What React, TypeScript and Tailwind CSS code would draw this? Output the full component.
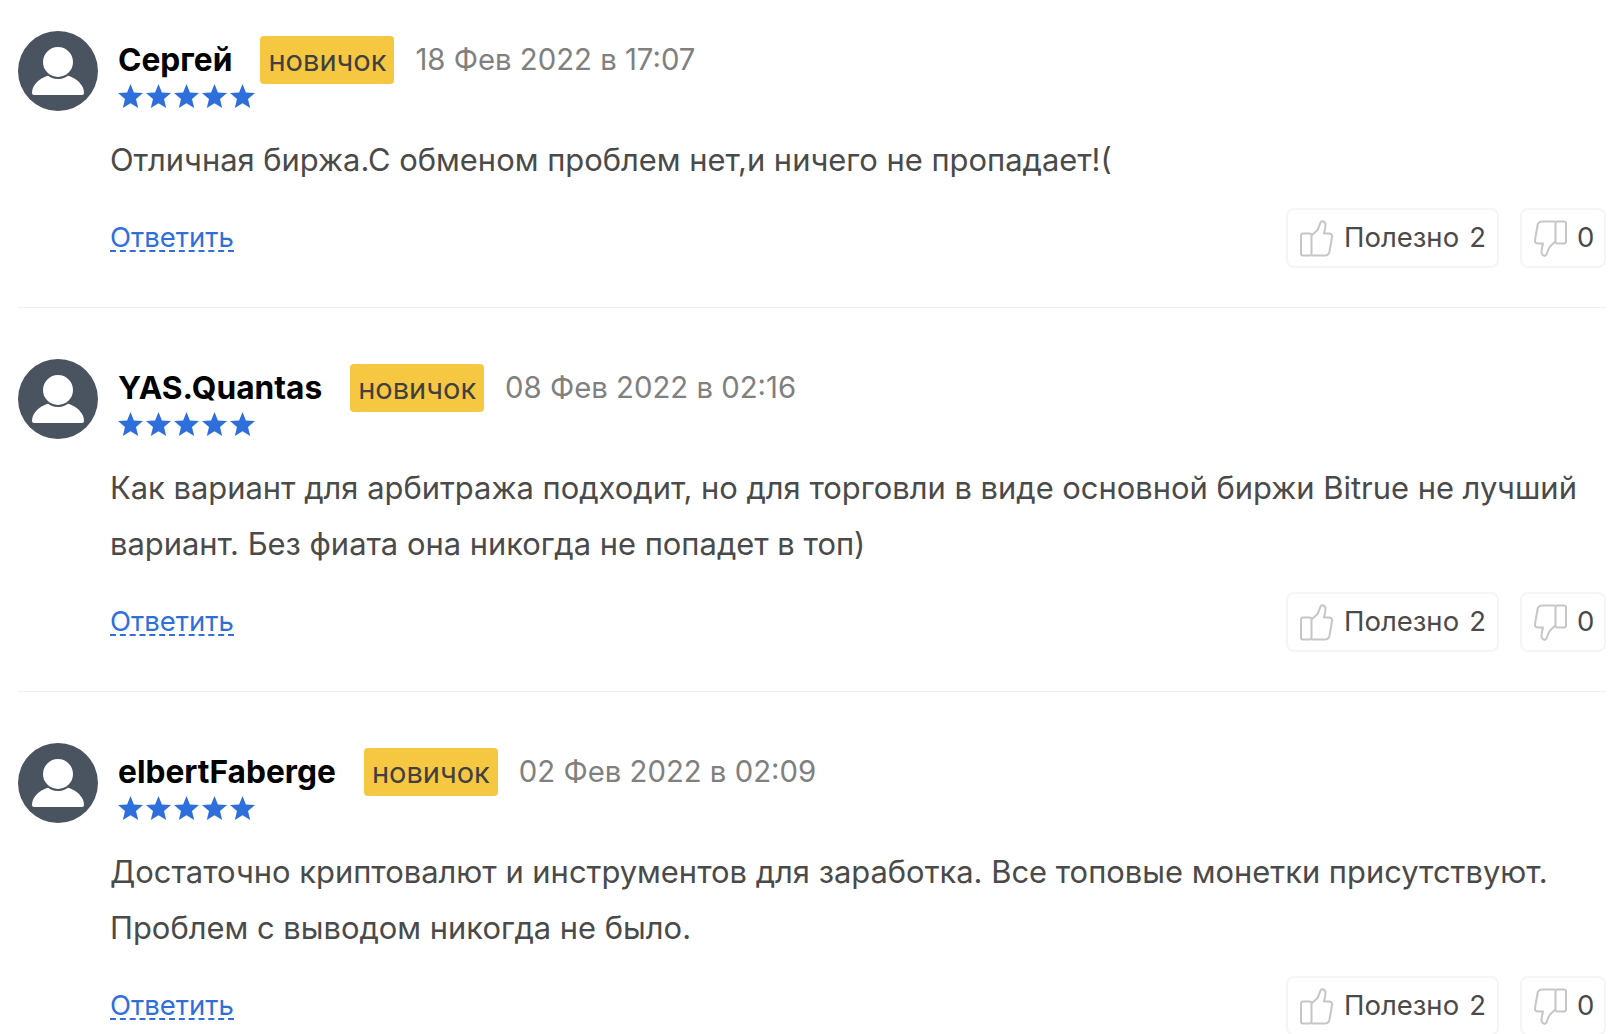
import React from 'react';

interface Comment {
  name: string;
  date: string;
  lines: string[];
}

const comments: Comment[] = [
  {
    name: 'Сергей',
    date: '18 Фев 2022 в 17:07',
    lines: ['Отличная биржа.С обменом проблем нет,и ничего не пропадает!('],
  },
  {
    name: 'YAS.Quantas',
    date: '08 Фев 2022 в 02:16',
    lines: [
      'Как вариант для арбитража подходит, но для торговли в виде основной биржи Bitrue не лучший',
      'вариант. Без фиата она никогда не попадет в топ)',
    ],
  },
  {
    name: 'elbertFaberge',
    date: '02 Фев 2022 в 02:09',
    lines: [
      'Достаточно криптовалют и инструментов для заработка. Все топовые монетки присутствуют.',
      'Проблем с выводом никогда не было.',
    ],
  },
];

const Avatar = () => (
  <svg width="80" height="80" viewBox="0 0 80 80" className="shrink-0">
    <circle cx="40" cy="40" r="40" fill="#4a5360" />
    <path d="M14 62c0-10 12-19 26-19s26 9 26 19c0 1-1 2-2 2H16c-1 0-2-1-2-2z" fill="#fff" />
    <ellipse cx="40" cy="31" rx="16" ry="16" fill="#fff" stroke="#4a5360" strokeWidth="2" />
  </svg>
);

const Star = () => (
  <svg width="25" height="24" viewBox="0 0 25 24">
    <polygon points="12.5,0 15.9,8.4 25,9.1 18,15 20.2,24 12.5,19.2 4.8,24 7,15 0,9.1 9.1,8.4" fill="#2f6fdb" />
  </svg>
);

const Thumb = ({ down }: { down?: boolean }) => (
  <svg width="33" height="37" viewBox="0 0 33 37" fill="none" stroke="#c6c6c6" strokeWidth="2" className={down ? 'rotate-180' : ''}>
    <rect x="1" y="13.5" width="10.5" height="22" rx="2" />
    <path d="M11.5 15.5 17 10.5C19 8 19.5 5 20.5 2.5 21.5.5 25.5 1 25.5 5c0 3-1 6-1.5 8.5h5c2 0 3.5 1.5 3 3.5l-2.5 14.500c-.5 2.500-2 4-4.500 4H11.500" strokeLinejoin="round" />
  </svg>
);

const CommentRow = ({ comment, last }: { comment: Comment; last: boolean }) => (
  <div className={last ? 'pt-[31px]' : 'pt-[31px] pb-[39px] border-b border-[#efefef] mb-[20px]'}>
    <div className="flex items-start">
      <Avatar />
      <div className="ml-5 flex flex-col">
        <div className="flex items-start">
          <div className="text-[31.700px] leading-[36px] font-bold text-black mt-[11px] mr-[28px]">{comment.name}</div>
          <span className="mt-[5px] h-[48px] px-[8px] bg-[#f6c842] rounded-[4px] text-[29px] leading-[50px] text-[#404040]">новичок</span>
          <span className="ml-[21px] mt-[11px] text-[29.300px] leading-[36px] text-[#808080]">{comment.date}</span>
        </div>
        <div className="flex gap-[3px] mt-[0px]">
          {[0, 1, 2, 3, 4].map((i) => (
            <Star key={i} />
          ))}
        </div>
      </div>
    </div>
    <div className="ml-[92px] mt-[21px] text-[30.900px] leading-[56px] text-[#4a4a4a]">
      {comment.lines.map((line) => (
        <div key={line}>{line}</div>
      ))}
    </div>
    <div className="ml-[92px] mt-[20px] flex items-center justify-between">
      <a className="text-[27.500px] leading-[26px] text-[#2f6fdb] border-b-2 border-dashed border-[#2f6fdb]">Ответить</a>
      <div className="flex gap-[21px]">
        <div className="h-[60px] w-[213px] flex items-center pl-[12px] border-2 border-[#f5f5f5] rounded-[8px] text-[27.500px] text-[#4a4a4a]">
          <Thumb />
          <span className="ml-[11px]">Полезно</span>
          <span className="ml-[10px]">2</span>
        </div>
        <div className="h-[60px] w-[86px] flex items-center pl-[12px] border-2 border-[#f5f5f5] rounded-[8px] text-[27.500px] text-[#4a4a4a]">
          <Thumb down />
          <span className="ml-[10px]">0</span>
        </div>
      </div>
    </div>
  </div>
);

export default function App() {
  return (
    <div className="w-[1620px] h-[1034px] overflow-hidden bg-white pl-[18px] pr-[14px] font-['Inter',sans-serif]">
      {comments.map((c, i) => (
        <CommentRow key={c.name} comment={c} last={i === comments.length - 1} />
      ))}
    </div>
  );
}
